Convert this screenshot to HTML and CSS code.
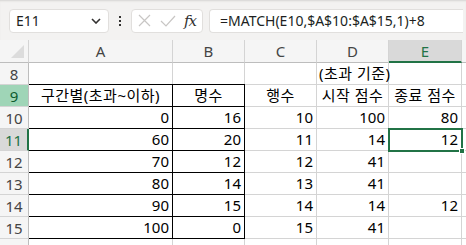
FILE: index.html
```html
<!DOCTYPE html>
<html lang="ko">
<head>
    <meta charset="UTF-8">
    <title>Excel - MATCH</title>
    <link rel="stylesheet" href="styles.css">
</head>
<body>
    <div class="toolbar">
        <div class="name-box">
            <span>E11</span>
            <svg class="chevron" width="10" height="6" viewBox="0 0 10 6"><path d="M1 1 L5 5 L9 1" fill="none" stroke="#323130" stroke-width="1.6"/></svg>
        </div>
        <div class="dots"><i></i><i></i><i></i></div>
        <div class="fx-box">
            <svg width="13" height="13" viewBox="0 0 13 13"><path d="M1 1 L12 12 M12 1 L1 12" stroke="#c8c6c4" stroke-width="1.2"/></svg>
            <svg width="16" height="12" viewBox="0 0 16 12"><path d="M1 6 L6 11 L15 1" fill="none" stroke="#c8c6c4" stroke-width="1.2"/></svg>
            <span class="fx">fx</span>
        </div>
        <div class="formula">=MATCH(E10,$A$10:$A$15,1)+8</div>
    </div>

    <div class="sheet">
        <div class="hd corner"><span class="tri"></span></div>
        <div class="hd col">A</div>
        <div class="hd col">B</div>
        <div class="hd col">C</div>
        <div class="hd col">D</div>
        <div class="hd col active">E</div>
        <div class="hd col rest"></div>

        <div class="hd row">8</div>
        <div class="c"></div><div class="c"></div><div class="c"></div>
        <div class="c left"><span class="over">(초과 기준)</span></div><div class="c"></div><div class="c rest"></div>

        <div class="hd row green">9</div>
        <div class="c mid b-top b-right">구간별(초과~이하)</div>
        <div class="c mid b-top b-right">명수</div>
        <div class="c mid">행수</div>
        <div class="c mid">시작 점수</div>
        <div class="c mid">종료 점수</div>
        <div class="c rest"></div>

        <div class="hd row">10</div>
        <div class="c b-top b-right">0</div><div class="c b-top b-right">16</div>
        <div class="c">10</div><div class="c">100</div><div class="c">80</div><div class="c rest"></div>

        <div class="hd row sel">11</div>
        <div class="c b-top b-right">60</div><div class="c b-top b-right">20</div>
        <div class="c">11</div><div class="c">14</div><div class="c picked">12<span class="handle"></span></div><div class="c rest"></div>

        <div class="hd row">12</div>
        <div class="c b-top b-right">70</div><div class="c b-top b-right">12</div>
        <div class="c">12</div><div class="c">41</div><div class="c"></div><div class="c rest"></div>

        <div class="hd row">13</div>
        <div class="c b-top b-right">80</div><div class="c b-top b-right">14</div>
        <div class="c">13</div><div class="c">41</div><div class="c"></div><div class="c rest"></div>

        <div class="hd row">14</div>
        <div class="c b-top b-right">90</div><div class="c b-top b-right">15</div>
        <div class="c">14</div><div class="c">14</div><div class="c">12</div><div class="c rest"></div>

        <div class="hd row">15</div>
        <div class="c b-top b-right b-bottom">100</div><div class="c b-top b-right b-bottom">0</div>
        <div class="c">15</div><div class="c">41</div><div class="c"></div><div class="c rest"></div>

        <div class="hd row">16</div>
        <div class="c"></div><div class="c"></div><div class="c"></div><div class="c"></div><div class="c"></div><div class="c rest"></div>
    </div>
</body>
</html>
```

FILE: styles.css
```css
* {
    box-sizing: border-box;
}

body {
    margin: 0;
    width: 466px;
    height: 245px;
    overflow: hidden;
    background: #ffffff;
    font-family: "Noto Sans", "Noto Sans CJK KR", sans-serif;
    color: #000;
}

/* 수식 입력줄 */
.toolbar {
    height: 40px;
    background: #f3f2f1;
    box-shadow: inset 0 2px 2px -1px #d6d4d2;
    display: flex;
    align-items: center;
    padding: 1px 0 0 9px;
    gap: 0;
}

.name-box {
    width: 100px;
    height: 24px;
    background: #fff;
    border: 1px solid #e1dfdd;
    border-radius: 4px;
    display: flex;
    align-items: center;
    justify-content: space-between;
    padding: 0 7px 0 6px;
    font-size: 14px;
    color: #201f1e;
}

.dots {
    width: 22px;
    display: flex;
    flex-direction: column;
    align-items: center;
    gap: 2px;
}

.dots i {
    width: 2px;
    height: 2px;
    background: #323130;
}

.fx-box {
    width: 72px;
    height: 24px;
    background: #fff;
    border: 1px solid #e1dfdd;
    border-radius: 4px;
    display: flex;
    align-items: center;
    gap: 9px;
    padding-left: 6px;
}

.fx {
    font-family: "DejaVu Serif", serif;
    font-style: italic;
    font-size: 15px;
    color: #323130;
    margin-left: -1px;
    letter-spacing: -1px;
}

.formula {
    flex: 1;
    height: 24px;
    margin: 0 3px 0 6px;
    background: #fff;
    border: 1px solid #e1dfdd;
    border-right: none;
    border-radius: 4px 0 0 4px;
    padding-left: 10px;
    font-size: 14px;
    line-height: 22px;
    color: #201f1e;
    white-space: nowrap;
    overflow: hidden;
}

/* 시트 */
.sheet {
    display: grid;
    grid-template-columns: 29px 144px 72px 72px 72px 73px 4px;
    grid-template-rows: 23px repeat(9, 22px);
    font-size: 15px;
}

.hd {
    background: #f5f5f5;
    color: #444;
    font-size: 15px;
    display: flex;
    align-items: center;
    justify-content: center;
    border-right: 1px solid #d4d4d4;
    border-bottom: 1px solid #d4d4d4;
}

.hd.col {
    border-bottom: 1px solid #bdbdbd;
}

.hd.col.active {
    background: #d9d9d9;
    color: #217346;
    border-bottom: 2px solid #217346;
}

.hd.rest {
    background: #f5f5f5;
    border-right: none;
}

.corner {
    position: relative;
    border-bottom: 1px solid #bdbdbd;
}

.tri {
    position: absolute;
    right: 4px;
    bottom: 4px;
    width: 0;
    height: 0;
    border-left: 13px solid transparent;
    border-bottom: 13px solid #dcdcdc;
}

.hd.row {
    border-right: 1px solid #bdbdbd;
}

.hd.row.green {
    background: #9fd5b7;
    color: #0e5c2f;
}

.hd.row.sel {
    background: #d9d9d9;
    color: #217346;
    border-right: 2px solid #217346;
}

.c {
    border-right: 1px solid #d4d4d4;
    border-bottom: 1px solid #d4d4d4;
    display: flex;
    align-items: center;
    justify-content: flex-end;
    padding: 0 3px;
    white-space: nowrap;
    line-height: 1;
    position: relative;
}

.c.rest {
    border-right: none;
}

.c.mid {
    justify-content: center;
    letter-spacing: 0.5px;
}

.c.left {
    justify-content: flex-start;
    overflow: visible;
}

.over {
    position: absolute;
    left: 2px;
    top: 3px;
    letter-spacing: 0.5px;
}

/* 표 테두리 */
.b-top {
    border-top: 1px solid #000;
    margin-top: -1px;
}

.b-right {
    border-right: 1px solid #000;
}

.b-bottom {
    border-bottom: 1px solid #000;
}

/* 선택된 셀 */
.picked {
    outline: 2px solid #217346;
    outline-offset: -1px;
    z-index: 2;
}

.handle {
    position: absolute;
    right: -4px;
    bottom: -4px;
    width: 6px;
    height: 6px;
    background: #217346;
    border: 1px solid #fff;
}
```
